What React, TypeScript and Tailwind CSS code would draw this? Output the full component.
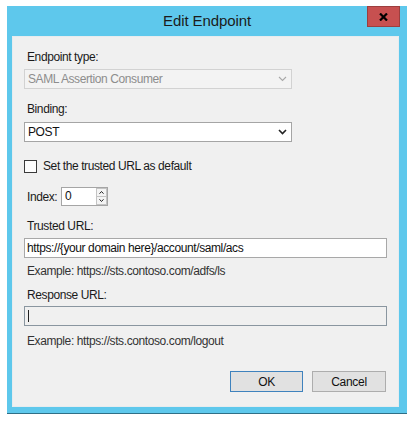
import React from "react";

const font = { fontFamily: '"Liberation Sans", Arial, sans-serif' };

function Label({ children, className = "" }: { children: React.ReactNode; className?: string }) {
  return (
    <div className={"h-[14px] pl-[3px] text-[12px] leading-[14px] tracking-[-0.4px] text-[#1a1a1a] " + className}>
      {children}
    </div>
  );
}

function Chevron({ color, weight }: { color: string; weight: number }) {
  return (
    <svg width="9" height="6" viewBox="0 0 9 6" className="block">
      <path d="M1 1 L4.5 4.5 L8 1" fill="none" stroke={color} strokeWidth={weight} />
    </svg>
  );
}

export default function App() {
  return (
    <div className="min-h-[425px] w-[414px] bg-white pl-[7px] pt-[6px]" style={font}>
      <div className="flex h-[408px] w-[400px] flex-col border-b border-[#2f6f86] bg-[#5ec8ec]">
        {/* Title bar */}
        <div className="relative flex h-[30px] items-center justify-center">
          <span className="text-[15px] tracking-[-0.1px] text-[#1b1b1b]">Edit Endpoint</span>
          <div className="absolute right-[7px] top-0 flex h-[21px] w-[33px] items-center justify-center border border-[#9c3e3e] bg-[#c75050]">
            <svg width="9" height="8" viewBox="0 0 9 8">
              <path d="M1 0.5 L8 7.5 M8 0.5 L1 7.5" stroke="#000" strokeWidth="2.2" />
            </svg>
          </div>
        </div>
        {/* Body panel */}
        <div className="ml-[5px] mr-[8px] flex h-[371px] flex-col border border-[#e6ecef] bg-[#f0f0f0] pl-[11px] pr-[11px] pt-[13px]">
          <Label>Endpoint type:</Label>
          <div className="mt-[5px] flex h-[20px] w-[268px] items-center justify-between border border-[#d2d2d2] bg-[#f3f3f3] pl-[3px] pr-[4px]">
            <span className="text-[12px] tracking-[-0.4px] text-[#8d8d8d]">SAML Assertion Consumer</span>
            <Chevron color="#a8a8a8" weight={1.1} />
          </div>

          <Label className="mt-[13px]">Binding:</Label>
          <div className="mt-[6px] flex h-[20px] w-[268px] items-center justify-between border border-[#a5a5a5] bg-white pl-[3px] pr-[4px]">
            <span className="text-[12px] tracking-[-0.4px] text-[#111]">POST</span>
            <Chevron color="#222" weight={1.6} />
          </div>

          <div className="mt-[17px] flex h-[14px] items-center gap-[6px]">
            <div className="h-[13px] w-[13px] border border-[#3a3a3a] bg-[#fdfdfd]" />
            <span className="text-[12px] tracking-[-0.4px] text-[#1a1a1a]">Set the trusted URL as default</span>
          </div>

          <div className="mt-[14px] flex h-[19px] items-center">
            <span className="w-[37px] pl-[3px] text-[12px] tracking-[-0.4px] text-[#1a1a1a]">Index:</span>
            <div className="flex h-[19px] w-[47px] border border-[#a5a5a5] bg-white">
              <span className="flex-1 pl-[3px] text-[12px] leading-[16px] text-[#111]">0</span>
              <div className="flex w-[11px] flex-col">
                <div className="flex h-[8.5px] items-center justify-center border border-[#c4c4c4] bg-[#f4f4f4]">
                  <svg width="5" height="3" viewBox="0 0 5 3">
                    <path d="M0.5 2.7 L2.5 0.5 L4.5 2.7" fill="none" stroke="#222" strokeWidth="1" />
                  </svg>
                </div>
                <div className="flex h-[8.5px] items-center justify-center border border-t-0 border-[#c4c4c4] bg-[#f4f4f4]">
                  <svg width="5" height="3" viewBox="0 0 5 3">
                    <path d="M0.5 0.3 L2.5 2.5 L4.5 0.3" fill="none" stroke="#222" strokeWidth="1" />
                  </svg>
                </div>
              </div>
            </div>
          </div>

          <Label className="mt-[13px]">Trusted URL:</Label>
          <div className="mt-[5px] flex h-[20px] w-[363px] items-center border border-[#a8a8a8] bg-white pl-[2px]">
            <span className="text-[12px] tracking-[-0.4px] text-[#111]">https://{"{"}your domain here{"}"}/account/saml/acs</span>
          </div>
          <Label className="mt-[6px] text-[#333]">Example: https://sts.contoso.com/adfs/ls</Label>

          <Label className="mt-[10px]">Response URL:</Label>
          <div className="mt-[4px] flex h-[20px] w-[363px] items-center border border-[#8a96a0] bg-[#f0f0f0] pl-[3px]">
            <div className="h-[12px] w-[1px] bg-[#222]" />
          </div>
          <Label className="mt-[8px] text-[#333]">Example: https://sts.contoso.com/logout</Label>

          <div className="mt-[23px] flex justify-end gap-[9px] pr-[1px]">
            <button className="flex h-[21px] w-[73px] items-center justify-center border border-[#3f82bd] bg-[#e1e1e1] text-[12px] tracking-[-0.3px] text-[#111]">
              OK
            </button>
            <button className="flex h-[21px] w-[74px] items-center justify-center border border-[#adadad] bg-[#e1e1e1] text-[12px] tracking-[-0.3px] text-[#111]">
              Cancel
            </button>
          </div>
        </div>
      </div>
    </div>
  );
}
